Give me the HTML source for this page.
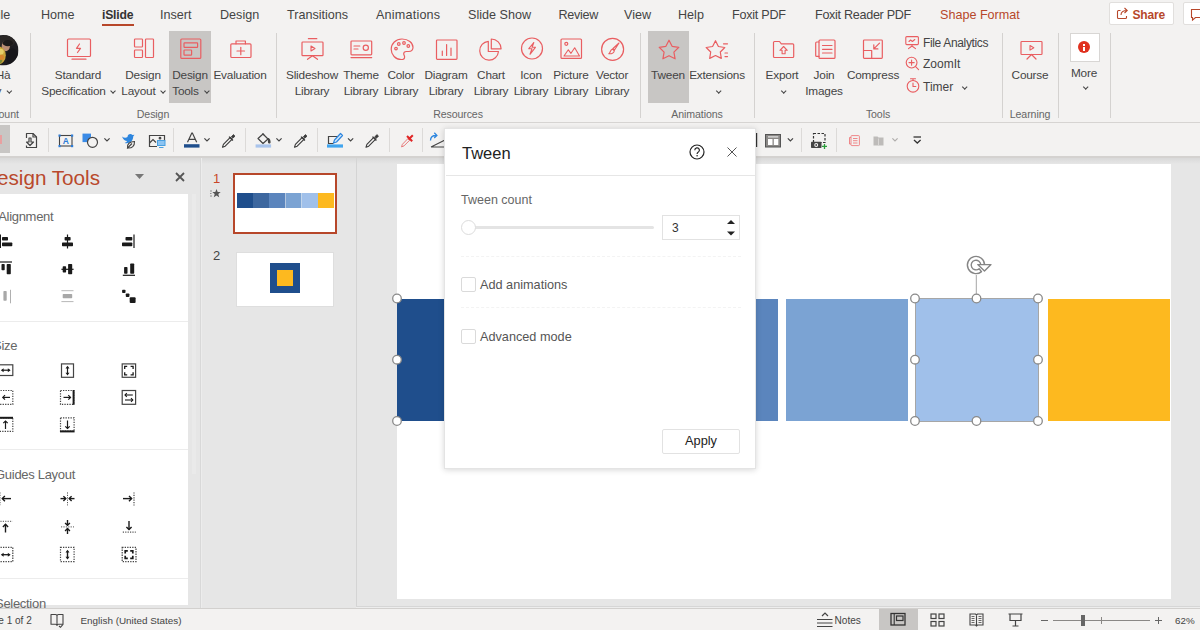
<!DOCTYPE html>
<html><head><meta charset="utf-8">
<style>
*{box-sizing:border-box;margin:0;padding:0}
html,body{width:1200px;height:630px;overflow:hidden;background:#e6e6e6;font-family:"Liberation Sans",sans-serif;}
.a{position:absolute}
.t{position:absolute;white-space:nowrap;color:#444;font-size:12px;line-height:14px}
.c{text-align:center}
#tabs{left:0;top:0;width:1200px;height:30px;background:#f3f2f1;overflow:hidden}
.tab{position:absolute;top:7px;font-size:12.6px;line-height:16px;color:#444;white-space:nowrap}
#ribbon{left:0;top:30px;width:1200px;height:93px;background:#f3f2f1;border-bottom:1px solid #d6d4d2}
.sep{position:absolute;top:33px;width:1px;height:85px;background:#d4d2d0}
.gl{position:absolute;top:108px;font-size:10.6px;letter-spacing:-.1px;line-height:13px;color:#666;white-space:nowrap;transform:translateX(-50%)}
.bl{position:absolute;font-size:11.8px;letter-spacing:-.2px;line-height:15.5px;color:#444;white-space:nowrap;text-align:center;transform:translateX(-50%)}
#qat{left:0;top:123px;width:1200px;height:35px;background:#f3f2f1;border-bottom:2px solid #d4d2d0}
svg{position:absolute;overflow:visible}
.ri{fill:none;stroke:#e95e61;stroke-width:1.2}
.chv{display:inline-block;width:4px;height:4px;border-right:1.2px solid #444;border-bottom:1.2px solid #444;transform:rotate(45deg) translate(-1px,-2px);margin-left:2px}
</style></head><body>
<!-- TABS -->
<div id="tabs" class="a">
<span class="tab" style="left:-10px">File</span>
<span class="tab" style="left:41px">Home</span>
<span class="tab" style="left:102px;color:#333;font-weight:bold;font-size:12.2px;letter-spacing:-.2px">iSlide</span>
<div class="a" style="left:102px;top:23.5px;width:32px;height:2.5px;background:#b7472a"></div>
<span class="tab" style="left:160px">Insert</span>
<span class="tab" style="left:220px">Design</span>
<span class="tab" style="left:287px">Transitions</span>
<span class="tab" style="left:376px;letter-spacing:.2px">Animations</span>
<span class="tab" style="left:468px">Slide Show</span>
<span class="tab" style="left:558.5px;letter-spacing:-.3px">Review</span>
<span class="tab" style="left:624px">View</span>
<span class="tab" style="left:678px">Help</span>
<span class="tab" style="left:732px;letter-spacing:-.25px">Foxit PDF</span>
<span class="tab" style="left:815px;letter-spacing:-.3px">Foxit Reader PDF</span>
<span class="tab" style="left:940px;color:#b7472a">Shape Format</span>
<div class="a" style="left:1109px;top:2px;width:65px;height:23px;background:#fff;border:1px solid #e1dfdd;border-radius:2px"></div>
<svg style="left:1116px;top:7px" width="13" height="13" viewBox="0 0 13 13"><path d="M4.5 3.5H2.5a1 1 0 0 0-1 1v6a1 1 0 0 0 1 1h7a1 1 0 0 0 1-1V9M5 8c0-3 2-4.5 6-4.5M8.5 1l2.7 2.5L8.5 6" fill="none" stroke="#b7472a" stroke-width="1.1"/></svg>
<span class="tab" style="left:1132.5px;color:#b7472a;font-weight:bold;font-size:12px;letter-spacing:-.2px">Share</span>
<div class="a" style="left:1183px;top:2px;width:30px;height:23px;background:#fff;border:1px solid #e1dfdd;border-radius:2px"></div>
<svg style="left:1190px;top:8px" width="12" height="12" viewBox="0 0 12 12"><path d="M1.5 1.5h12v8h-8l-3 2.5v-2.5h-1z" fill="none" stroke="#b7472a" stroke-width="1.1"/></svg>
</div>
<!-- RIBBON -->
<div id="ribbon" class="a"></div>
<!-- avatar -->
<svg style="left:-12px;top:34.7px" width="30.5" height="30.5" viewBox="0 0 30 30"><defs><clipPath id="av"><circle cx="15" cy="15" r="15"/></clipPath></defs><g clip-path="url(#av)"><rect width="30" height="30" fill="#1d1d21"/><ellipse cx="18" cy="6" rx="9" ry="6" fill="#2a2726"/><ellipse cx="17.5" cy="11" rx="4" ry="5" fill="#b98d74"/><ellipse cx="19.5" cy="8" rx="5" ry="3" fill="#1c1a1a"/><ellipse cx="10" cy="20" rx="7.5" ry="9" fill="#c9a53a"/><ellipse cx="12" cy="16.5" rx="3.5" ry="3" fill="#e6cf6a"/><ellipse cx="9" cy="25" rx="5" ry="4" fill="#7d8a35"/><ellipse cx="13" cy="22" rx="3" ry="2.5" fill="#d8872e"/><ellipse cx="24" cy="22" rx="6" ry="9" fill="#17171b"/></g></svg>
<div class="bl" style="left:3px;top:68px">Hà</div>
<div class="bl" style="left:3px;top:83.5px">y <span class="chv"></span></div>
<div class="gl" style="left:0px">Account</div>
<div class="sep" style="left:30px"></div>
<!-- highlighted -->
<div class="a" style="left:169px;top:31px;width:42px;height:72px;background:#c8c6c4"></div>
<div class="a" style="left:648px;top:31px;width:41px;height:72px;background:#c8c6c4"></div>
<div class="bl" style="left:78px;top:68px">Standard</div><div class="bl" style="left:78px;top:83.5px">Specification <span class="chv"></span></div><div class="bl" style="left:143px;top:68px">Design</div><div class="bl" style="left:143px;top:83.5px">Layout <span class="chv"></span></div><div class="bl" style="left:190px;top:68px">Design</div><div class="bl" style="left:190px;top:83.5px">Tools <span class="chv"></span></div><div class="bl" style="left:240px;top:68px">Evaluation</div><div class="gl" style="left:153px">Design</div><div class="sep" style="left:276px"></div><div class="bl" style="left:312px;top:68px">Slideshow</div><div class="bl" style="left:312px;top:83.5px">Library</div><div class="bl" style="left:361px;top:68px">Theme</div><div class="bl" style="left:361px;top:83.5px">Library</div><div class="bl" style="left:401px;top:68px">Color</div><div class="bl" style="left:401px;top:83.5px">Library</div><div class="bl" style="left:446px;top:68px">Diagram</div><div class="bl" style="left:446px;top:83.5px">Library</div><div class="bl" style="left:491px;top:68px">Chart</div><div class="bl" style="left:491px;top:83.5px">Library</div><div class="bl" style="left:531px;top:68px">Icon</div><div class="bl" style="left:531px;top:83.5px">Library</div><div class="bl" style="left:571px;top:68px">Picture</div><div class="bl" style="left:571px;top:83.5px">Library</div><div class="bl" style="left:612px;top:68px">Vector</div><div class="bl" style="left:612px;top:83.5px">Library</div><div class="gl" style="left:458px">Resources</div><div class="sep" style="left:640px"></div><div class="bl" style="left:668px;top:68px">Tween</div><div class="bl" style="left:717px;top:68px">Extensions</div><div class="bl" style="left:717px;top:83.5px"><span class="chv"></span></div><div class="gl" style="left:697px">Animations</div><div class="sep" style="left:754px"></div><div class="bl" style="left:782px;top:68px">Export</div><div class="bl" style="left:782px;top:83.5px"><span class="chv"></span></div><div class="bl" style="left:824px;top:68px">Join</div><div class="bl" style="left:824px;top:83.5px">Images</div><div class="bl" style="left:873px;top:68px">Compress</div><div class="t" style="left:923px;top:35.5px;line-height:15px;letter-spacing:-.35px">File Analytics</div>
<div class="t" style="left:923px;top:57px;line-height:15px">ZoomIt</div>
<div class="t" style="left:923px;top:79.5px;line-height:15px">Timer &nbsp;<span class="chv"></span></div>
<div class="gl" style="left:878px">Tools</div><div class="sep" style="left:1002px"></div><div class="bl" style="left:1030px;top:68px">Course</div><div class="gl" style="left:1030px">Learning</div><div class="sep" style="left:1058px"></div><div class="a" style="left:1070px;top:32.5px;width:29.5px;height:29px;background:#fff;border:1px solid #d8d6d4"></div>
<div class="a" style="left:1078px;top:41px;width:12px;height:12px;border-radius:50%;background:#e0311f"></div>
<div class="a" style="left:1083px;top:43.5px;width:2px;height:2px;background:#fff"></div>
<div class="a" style="left:1083px;top:46.5px;width:2px;height:4.5px;background:#fff"></div>
<div class="bl" style="left:1084px;top:66px">More</div>
<div class="bl" style="left:1084px;top:80px"><span class="chv"></span></div>
<div class="sep" style="left:1110px"></div>

<svg id="ricons" style="left:0;top:0" width="1200" height="125" viewBox="0 0 1200 125"><g class="ri" stroke-linejoin="round" stroke-linecap="round">
<!-- standard spec -->
<rect x="67.5" y="39" width="23" height="17.5" rx="1"/><path d="M72 59.2h14"/><path d="M79.5 44l-3 4.3h4l-3 4.2" stroke-width="1.2"/>
<!-- design layout -->
<rect x="134.5" y="39" width="8" height="8" rx=".8"/><rect x="134.5" y="50" width="8" height="7.5" rx=".8"/><rect x="145.5" y="39" width="8" height="18.5" rx=".8"/>
<!-- design tools -->
<rect x="180.8" y="39" width="20" height="19.4" rx="1"/><rect x="184" y="42.8" width="13.6" height="4.6" rx=".6"/><rect x="184" y="50" width="7.6" height="5.2" rx=".6"/>
<!-- evaluation -->
<rect x="230.8" y="43.8" width="20.2" height="13.7" rx="1"/><path d="M236 43.8v-2.8h9.4v2.8"/><path d="M237 51h7.5M240.8 47.3v7.4"/>
<!-- slideshow -->
<rect x="302" y="42" width="21" height="13.7" rx=".8"/><path d="M308.4 38.7h8.4M312.5 55.7l-5 3.6M312.5 55.7l5 3.6"/><path d="M311 46v5l4-2.5z" stroke-width="1.1"/>
<!-- theme -->
<rect x="351" y="41" width="20.7" height="13.8" rx=".8"/><path d="M351 57.6h20.7M354 46h5.8M354 49h4"/><circle cx="365.8" cy="47.8" r="2.6"/>
<!-- color palette -->
<path d="M402 39c-6.2 0-10.8 4.6-10.8 10.3 0 5.6 4.4 10.2 10 10.2 2.3 0 3.4-1.2 3.4-2.6 0-1.3-.9-1.9-.9-3.1 0-1.3 1-2.3 2.6-2.3h2.4c2.6 0 4.3-1.7 4.3-4.2C413 42.8 408.3 39 402 39z"/>
<circle cx="396" cy="48.6" r="1.3"/><circle cx="398.8" cy="44" r="1.3"/><circle cx="404" cy="43" r="1.3"/><circle cx="408.3" cy="46" r="1.3"/>
<!-- diagram -->
<rect x="436.5" y="40" width="20.5" height="19.3" rx=".800"/><path d="M442.3 51v4.5M446.6 44.5v11M451 48v7.5"/>
<!-- chart pie -->
<path d="M488.3 41.3a9.4 9.4 0 1 0 10.2 10.2h-10.2z"/><path d="M491.3 39v9.8h9.8a9.8 9.8 0 0 0-9.8-9.8z"/>
<!-- icon lib -->
<circle cx="532" cy="48.5" r="10.5"/><path d="M533.8 42.5l-5 6.2h3.2l-2 5.6 5.4-7h-3.3z" stroke-width="1.1"/>
<!-- picture -->
<rect x="561" y="39" width="20.5" height="19.4" rx="1"/><circle cx="566.3" cy="43.8" r="1.5"/><path d="M564 56l4.3-6.2 2.7 3.5 3.7-5.5 4.8 8.2z" stroke-width="1.1"/>
<!-- vector -->
<circle cx="612.6" cy="49.3" r="11"/><path d="M619 43l-6 5.5 1.5 1.5zM612.5 49l1.8 1.8c-.5 2-2 3.2-5.5 3 1.7-.8.8-3.5 3.7-4.8z" stroke-width="1.1"/>
<!-- tween star -->
<path d="M669.0,40.2 L672.1,46.3 L678.8,47.3 L673.9,52.1 L675.1,58.8 L669.0,55.7 L662.9,58.8 L664.1,52.1 L659.2,47.3 L665.9,46.3Z"/>
<!-- extensions -->
<path d="M715.5,40.7 L718.4,46.5 L724.8,47.5 L720.3,52.0 L721.3,58.4 L715.5,55.5 L709.7,58.4 L710.7,52.0 L706.2,47.5 L712.6,46.5Z"/><path d="M723.5 43.8h4M725 53h2.5M725 56.6h2.5"/>
<!-- export -->
<path d="M773.5 42.5a1 1 0 0 1 1-1h5l1.8 2.3h11.4a1 1 0 0 1 1 1v11.7a1 1 0 0 1-1 1h-18.2a1 1 0 0 1-1-1z"/><path d="M783.6 46.5l-3.7 3.8h2.2v3.4h3v-3.4h2.2z" stroke-width="1.1"/>
<!-- join images -->
<rect x="819" y="40" width="16" height="18.4" rx="1"/><path d="M819 42h-2.3a1 1 0 0 0-1 1v12.4a1 1 0 0 0 1 1h2.3M822.5 45.5h9.5M822.5 49.3h9.5M822.5 53h9.5"/>
<!-- compress -->
<rect x="863.5" y="40" width="18.8" height="18.4" rx=".800"/><path d="M863.5 50.5h8.2v7.9M879.5 43.2l-5.7 5.7M873.8 44.8v4.1h4.1"/>
<!-- file analytics -->
<rect x="905.8" y="36.6" width="12.6" height="8" rx="1" stroke-width="1.1"/><path d="M912 44.6v1.5M912 46l-3.5 2.6M912 46l3.5 2.6M909 41.5l1.6-1.5 1.8 1.5 2.4-2" stroke-width="1.1"/>
<!-- zoomit -->
<circle cx="911.6" cy="62.6" r="5.4" stroke-width="1.1"/><path d="M915.6 66.6l3 3M909 62.6h5.2M911.6 60v5.2" stroke-width="1.1"/>
<!-- timer -->
<circle cx="913" cy="86.3" r="5.8" stroke-width="1.1"/><path d="M910.5 78.8h5M913 78.8v1.7M913 83v3.5h2.8" stroke-width="1.1"/>
<!-- course -->
<rect x="1021" y="41.5" width="21" height="13" rx=".800"/><path d="M1031.5 54.5l-4.5 4.5M1031.5 54.5l4.5 4.5M1027 59h0"/><path d="M1030 45.5v4.6l3.8-2.3z" stroke-width="1.1"/>
</g></svg>
<!-- QAT -->
<div id="qat" class="a"></div>
<svg id="qicons" style="left:0;top:0" width="1200" height="160" viewBox="0 0 1200 160"><rect x="0" y="125" width="10" height="28" fill="#c8c6c4"/><rect x="0" y="135" width="2" height="9" fill="#e8a0a0"/><g fill="none" stroke="#444" stroke-width="1.2" stroke-linejoin="round"><path d="M26.5 138v-4.5h6.5l3.5 3.5v10.5h-10v-2"/><path d="M33 133.5v3.5h3.5"/><path d="M29 138v4h-2.5l3.5 3.5 3.5-3.5h-2.5v-4z"/></g><path d="M48.5 128v24" stroke="#dcdad8" stroke-width="1"/><rect x="59.5" y="135.5" width="12.5" height="10.5" fill="none" stroke="#444" stroke-width="1.1"/><rect x="58.5" y="134.5" width="2.2" height="2.2" fill="#2e7cd6"/><rect x="71.0" y="134.5" width="2.2" height="2.2" fill="#2e7cd6"/><rect x="58.5" y="145.0" width="2.2" height="2.2" fill="#2e7cd6"/><rect x="71.0" y="145.0" width="2.2" height="2.2" fill="#2e7cd6"/><text x="65.8" y="144" font-family="Liberation Sans" font-size="8.5" font-weight="bold" fill="#2e7cd6" text-anchor="middle">A</text><rect x="82.5" y="133.6" width="8.5" height="8.5" fill="#3b8be6"/><circle cx="92.5" cy="142.3" r="5" fill="#f3f2f1" stroke="#444" stroke-width="1.2"/><path d="M104.4 138.3l2.6 2.6 2.6-2.6" stroke="#444" stroke-width="1.2" fill="none"/><path d="M122 136.5c2 1.5 4 1.5 5.5.5 0-2.5 3-4 5-2l2-.300-1.3 1.8c0 5-4 7.5-8.5 6.5 1-.500 2-1 2.3-2-2 0-3.5-1-5-4.5z" fill="#2e86de"/><path d="M127.5 148c-.500-4 2-6.5 7-6.5.3 4.5-2.5 7-7 6.5zM127 148.5l5-5" fill="#f3f2f1" stroke="#444" stroke-width="1.1"/><g fill="none" stroke="#444" stroke-width="1.2"><path d="M157 146.5h-7.5v-11h15v5"/><path d="M149.5 143l3.5-3.5 3 3"/><circle cx="160" cy="138.2" r=".800" fill="#444"/></g><rect x="157.5" y="140.5" width="7.5" height="5" fill="#8cc4f2" stroke="#4aa0e0" stroke-width="1"/><path d="M159 147.5h4.5" stroke="#4aa0e0" stroke-width="1"/><path d="M173.5 128v24" stroke="#dcdad8" stroke-width="1"/><path d="M187.5 142.3l4.3-9.3h.600l4.3 9.3M189 139.3h6" fill="none" stroke="#444" stroke-width="1.2"/><rect x="184" y="144.2" width="15.5" height="3.4" fill="#1f4e8c"/><path d="M204.4 138.3l2.6 2.6 2.6-2.6" stroke="#444" stroke-width="1.2" fill="none"/><g transform="translate(221.0,133)" fill="none" stroke="#3a3a3a" stroke-width="1.1" stroke-linejoin="round"><path d="M9.3 4.3l1.9 1.9-7 7-2.7 1 .900-2.8z"/><path d="M8 3.6l3.9 3.9" stroke-width="1.3"/><path d="M10.4 3.8l2-2.2 1.6 1.6-2.2 2z" fill="#3a3a3a" stroke-width=".8"/></g><path d="M245.5 128v24" stroke="#dcdad8" stroke-width="1"/><g fill="none" stroke="#444" stroke-width="1.2" stroke-linejoin="round"><path d="M263 134l5 5-5 4.5-5-5z"/><path d="M262.5 133.5l1.5 1.5"/><path d="M268.5 138.5c1.5 1.5 2 2.5 1.5 4-.700.8-1.5.3-1.5-.500z" fill="#444"/></g><rect x="255.6" y="144.4" width="15.5" height="3.2" fill="#a9c4ec"/><path d="M276.4 138.3l2.6 2.6 2.6-2.6" stroke="#444" stroke-width="1.2" fill="none"/><g transform="translate(293.0,133)" fill="none" stroke="#3a3a3a" stroke-width="1.1" stroke-linejoin="round"><path d="M9.3 4.3l1.9 1.9-7 7-2.7 1 .900-2.8z"/><path d="M8 3.6l3.9 3.9" stroke-width="1.3"/><path d="M10.4 3.8l2-2.2 1.6 1.6-2.2 2z" fill="#3a3a3a" stroke-width=".8"/></g><path d="M317.5 128v24" stroke="#dcdad8" stroke-width="1"/><path d="M338 136.5h-9.5v7h5" fill="none" stroke="#444" stroke-width="1.2"/><path d="M340.5 133.5l2 2-6 6.5-3 1 1-3z" fill="#cfe6fb" stroke="#2e86de" stroke-width="1.2" stroke-linejoin="round"/><rect x="327" y="144.4" width="16" height="3.2" fill="#41a5ee"/><path d="M348.0 138.3l2.6 2.6 2.6-2.6" stroke="#444" stroke-width="1.2" fill="none"/><g transform="translate(364.5,133)" fill="none" stroke="#3a3a3a" stroke-width="1.1" stroke-linejoin="round"><path d="M9.3 4.3l1.9 1.9-7 7-2.7 1 .900-2.8z"/><path d="M8 3.6l3.9 3.9" stroke-width="1.3"/><path d="M10.4 3.8l2-2.2 1.6 1.6-2.2 2z" fill="#3a3a3a" stroke-width=".8"/></g><path d="M389.5 128v24" stroke="#dcdad8" stroke-width="1"/><g transform="translate(400,133)" fill="none" stroke-linejoin="round"><path d="M8 5.5l1.7 1.7-5.7 5.7-2.5 1 .900-2.6z" stroke="#e87a7a" stroke-width="1"/><path d="M7 3l5.2 5.2M12.8 2.2l-4.3 4.3" stroke="#e02525" stroke-width="2"/></g><path d="M422.5 128v24" stroke="#dcdad8" stroke-width="1"/><path d="M430.5 140.5c0-3.5 2-5 5.5-5M434.3 132.8l2.6 2.7-2.7 2.5" fill="none" stroke="#2e86de" stroke-width="1.3"/><path d="M431 147l14-7M431 147h14" fill="none" stroke="#444" stroke-width="1.1"/><path d="M756.5 133v14" stroke="#333" stroke-width="1.4"/><rect x="765.5" y="134.5" width="15" height="12.5" fill="#8a8886" stroke="#555" stroke-width="1"/><rect x="768" y="139" width="4.5" height="6" fill="#fff"/><rect x="773.8" y="139" width="4.5" height="6" fill="#fff"/><rect x="768" y="136.3" width="10.3" height="1.2" fill="#e8e8e8"/><path d="M787.8 138.3l2.6 2.6 2.6-2.6" stroke="#444" stroke-width="1.2" fill="none"/><path d="M801.5 128v24" stroke="#dcdad8" stroke-width="1"/><rect x="813.5" y="133.5" width="11.5" height="9" fill="none" stroke="#333" stroke-width="1.2" stroke-dasharray="2.5 1.5"/><rect x="811" y="141.8" width="10.5" height="6.2" rx=".800" fill="#444"/><circle cx="816.2" cy="145" r="2" fill="#f3f2f1"/><circle cx="816.2" cy="145" r=".900" fill="#444"/><path d="M822 146.4h5M824.5 144v5" stroke="#2a9d3a" stroke-width="1.3"/><path d="M836.5 128v24" stroke="#dcdad8" stroke-width="1"/><g fill="none" stroke="#ee7c7e" stroke-width=".9"><rect x="851" y="135.6" width="8.4" height="10" rx=".800"/><path d="M851 137.5h-1.5v6.5h1.5M853 138.5h4.5M853 140.7h4.5M853 143h4.5"/></g><path d="M873.5 136.5h4l1 1h5v8h-10z" fill="#bdbbb9"/><path d="M878.5 138.5v7" stroke="#d8d6d4" stroke-width="1"/><path d="M892.4 138.3l2.6 2.6 2.6-2.6" stroke="#b0aeac" stroke-width="1.2" fill="none"/><path d="M913.5 137h7.5" stroke="#333" stroke-width="1.3"/><path d="M914 140l3.3 3 3.3-3" fill="none" stroke="#333" stroke-width="1.3"/></svg>
<!-- MAIN -->
<div id="main" class="a" style="left:0;top:158px;width:1200px;height:450px;background:#e6e6e6"></div>
<div class="a" style="left:0;top:158px;width:1200px;height:6px;background:linear-gradient(#d9d9d9,#e6e6e6)"></div>
<!-- design tools pane -->
<div class="t" style="left:-18px;top:166px;font-size:20.7px;line-height:24px;color:#b9492c">Design Tools</div>
<svg style="left:135px;top:174px" width="10" height="6" viewBox="0 0 10 6"><path d="M0 0h9l-4.5 5z" fill="#777"/></svg>
<svg style="left:175px;top:172px" width="10" height="10" viewBox="0 0 10 10"><path d="M1 1l8 8M9 1l-8 8" stroke="#555" stroke-width="1.8"/></svg>
<div class="a" style="left:0;top:194px;width:188px;height:410.5px;background:#fff"></div>
<div class="a" style="left:192px;top:194px;width:4px;height:280px;background:#eaeaea"></div>
<div class="t" style="right:1146.7px;top:208.6px;font-size:13px;letter-spacing:-.3px;line-height:15px;color:#666">Alignment</div>
<div class="a" style="left:0;top:321px;width:188px;height:1px;background:#ececec"></div>
<div class="t" style="right:1182.9px;top:337.6px;font-size:13px;letter-spacing:-.3px;line-height:15px;color:#666">Size</div>
<div class="a" style="left:0;top:449px;width:188px;height:1px;background:#ececec"></div>
<div class="t" style="right:1125.0px;top:466.6px;font-size:13px;letter-spacing:-.3px;line-height:15px;color:#666">Guides Layout</div>
<div class="a" style="left:0;top:578px;width:188px;height:1px;background:#ececec"></div>
<div class="t" style="right:1154.2px;top:595.6px;font-size:13px;letter-spacing:-.3px;line-height:15px;color:#666">Selection</div>
<!-- thumbnails pane -->
<div class="a" style="left:200px;top:158px;width:1px;height:450px;background:#d8d8d8"></div><div class="a" style="left:201px;top:158px;width:1px;height:450px;background:#ececec"></div>
<div class="a" style="left:356px;top:158px;width:1px;height:450px;background:#d4d4d4"></div>
<div class="t" style="left:213px;top:171px;font-size:13px;line-height:16px;color:#c8472a">1</div>
<svg style="left:210px;top:189px" width="11" height="10" viewBox="0 0 11 10"><path d="M6.5 0l1.2 3h3l-2.4 2 .900 3.3-2.7-1.9-2.7 1.9.9-3.3-2.4-2h3z" fill="#555"/><path d="M0 2h2M0 4.5h1.5M0 7h2" stroke="#777" stroke-width=".800"/></svg>
<div class="a" style="left:233px;top:173px;width:104px;height:61px;background:#fff;border:2px solid #b7472a"></div>
<div class="a" style="left:237px;top:193px;width:97px;height:15px;background:linear-gradient(90deg,#1f4e8c 0,#1f4e8c 16.2px,#3d679f 16.2px,#3d679f 32.4px,#5b85bd 32.4px,#5b85bd 48.6px,#7ba3d3 48.6px,#7ba3d3 64.8px,#a0c0ea 64.8px,#a0c0ea 81px,#fdb91f 81px)"></div>
<div class="a" style="left:237px;top:193px;width:97px;height:15px;background:repeating-linear-gradient(90deg,transparent 0,transparent 15.8px,rgba(255,255,255,.55) 15.8px,rgba(255,255,255,.55) 16.2px)"></div><div class="t" style="left:213px;top:248px;font-size:13px;line-height:16px;color:#444">2</div>
<div class="a" style="left:236px;top:252px;width:98px;height:55px;background:#fff;border:1px solid #dedede"></div>
<div class="a" style="left:270px;top:263px;width:30px;height:30px;background:#1f4e8c"></div>
<div class="a" style="left:277px;top:270px;width:16px;height:16px;background:#fdb91f"></div>
<!-- slide -->
<div class="a" style="left:397px;top:164px;width:773.5px;height:435px;background:#fff"></div>
<div class="a" style="left:397px;top:299px;width:123px;height:122px;background:#1f4e8c"></div>
<div class="a" style="left:655px;top:299px;width:123px;height:122px;background:#5b85bd"></div>
<div class="a" style="left:786px;top:299px;width:122px;height:122px;background:#7ba3d3"></div>
<div class="a" style="left:915px;top:298px;width:124px;height:124px;background:#a0c0ea;border:1px solid #a6a6a6"></div>
<div class="a" style="left:1048px;top:299px;width:122px;height:122px;background:#fdb91f"></div>
<svg id="handles" style="left:0;top:0" width="1200" height="630" viewBox="0 0 1200 630"><g fill="#fff" stroke="#8a8a8a" stroke-width="1.3">
<path d="M976.3 298v-23" fill="none" stroke="#a6a6a6" stroke-width="1"/>
<circle cx="397" cy="298.5" r="4.3"/><circle cx="397" cy="359.7" r="4.3"/><circle cx="397" cy="421" r="4.3"/>
<circle cx="915" cy="298.5" r="4.3"/><circle cx="976.5" cy="298.5" r="4.3"/><circle cx="1038" cy="298.5" r="4.3"/>
<circle cx="915" cy="359.7" r="4.3"/><circle cx="1038" cy="359.7" r="4.3"/>
<circle cx="915" cy="421" r="4.3"/><circle cx="976.5" cy="421" r="4.3"/><circle cx="1038" cy="421" r="4.3"/>
</g>
<path d="M981.5 271.6A8.6 8.6 0 1 1 984.6 265H980.8A4.8 4.8 0 1 0 979.1 268.7Z" fill="#fff" stroke="#858585" stroke-width="1.4" stroke-linejoin="round"/><path d="M977.8 264.6h13.2l-6.5 6.5z" fill="#fff" stroke="#858585" stroke-width="1.4" stroke-linejoin="round"/>
</svg>
<!-- dialog -->
<div class="a" style="left:444px;top:128px;width:312px;height:341px;background:#fff;border:1px solid #e4e4e4;box-shadow:0 1px 6px rgba(0,0,0,.16)"></div>
<div class="t" style="left:462px;top:143px;font-size:16.5px;line-height:20px;color:#222">Tween</div>
<svg style="left:689px;top:144px" width="16" height="16" viewBox="0 0 16 16"><circle cx="8" cy="8" r="7" fill="none" stroke="#222" stroke-width="1.2"/><path d="M5.8 6.3a2.3 2.3 0 1 1 3.3 2c-.700.4-1 .800-1 1.6" fill="none" stroke="#222" stroke-width="1.2"/><circle cx="8.1" cy="11.7" r=".800" fill="#222"/></svg>
<svg style="left:727px;top:147px" width="10" height="10" viewBox="0 0 10 10"><path d="M.500.5l9 9M9.5.5l-9 9" stroke="#555" stroke-width="1"/></svg>
<div class="a" style="left:446px;top:175px;width:309px;height:1px;background:#e6e6e6"></div>
<div class="t" style="left:461px;top:192.7px;font-size:12.5px;line-height:15px;color:#666">Tween count</div>
<div class="a" style="left:470px;top:225.5px;width:184px;height:3px;border-radius:2px;background:#e4e4e4"></div>
<div class="a" style="left:461px;top:219.5px;width:15px;height:15px;border-radius:50%;background:#fff;border:1px solid #dcdcdc"></div>
<div class="a" style="left:662px;top:215px;width:78px;height:25px;background:#fff;border:1px solid #e2e2e2"></div>
<div class="t" style="left:672px;top:220.7px;font-size:12px;line-height:15px;color:#333">3</div>
<svg style="left:727px;top:219px" width="8" height="18" viewBox="0 0 8 18"><path d="M0 5l4-4 4 4zM0 12.5l4 4 4-4z" fill="#222"/></svg>
<div class="a" style="left:461px;top:256px;width:280px;height:0;border-top:1px dashed #f3f3f3"></div>
<div class="a" style="left:461px;top:277px;width:15px;height:15px;background:#fff;border:1px solid #dadada;border-radius:2px"></div>
<div class="t" style="left:480px;top:277.7px;font-size:12.7px;line-height:15px;color:#555">Add animations</div>
<div class="a" style="left:461px;top:307px;width:280px;height:0;border-top:1px dashed #f3f3f3"></div>
<div class="a" style="left:461px;top:329px;width:15px;height:15px;background:#fff;border:1px solid #dadada;border-radius:2px"></div>
<div class="t" style="left:480px;top:329.7px;font-size:12.7px;line-height:15px;color:#555">Advanced mode</div>
<div class="a" style="left:662px;top:429px;width:78px;height:25px;background:#fff;border:1px solid #e2e2e2;border-radius:2px"></div>
<div class="t c" style="left:662px;top:433px;width:78px;font-size:12.8px;line-height:16px;color:#222">Apply</div>
<svg id="pane" style="left:0;top:0" width="200" height="630" viewBox="0 0 200 630"><path d="M0.5 234.5L0.5 248.0" stroke="#1a1a1a" stroke-width="1.0" fill="none"/><rect x="2.0" y="237.0" width="6.0" height="3.5" rx="0.7" fill="#1a1a1a"/><rect x="2.0" y="242.5" width="10.3" height="3.8" rx="0.7" fill="#1a1a1a"/><path d="M67.5 234.5L67.5 248.5" stroke="#1a1a1a" stroke-width="1.2" fill="none"/><rect x="64.6" y="237.0" width="6.0" height="3.5" rx="0.7" fill="#1a1a1a"/><rect x="62.0" y="242.5" width="11.0" height="3.8" rx="0.7" fill="#1a1a1a"/><path d="M134.0 234.5L134.0 248.0" stroke="#1a1a1a" stroke-width="1.2" fill="none"/><rect x="125.5" y="237.0" width="6.8" height="3.5" rx="0.7" fill="#1a1a1a"/><rect x="122.0" y="242.5" width="10.3" height="3.8" rx="0.7" fill="#1a1a1a"/><path d="M-2.0 262.0L12.0 262.0" stroke="#1a1a1a" stroke-width="1.2" fill="none"/><rect x="1.5" y="264.0" width="3.2" height="6.2" rx="0.7" fill="#1a1a1a"/><rect x="6.7" y="264.0" width="4.1" height="10.2" rx="0.7" fill="#1a1a1a"/><path d="M61.4 269.3L73.6 269.3" stroke="#1a1a1a" stroke-width="1.2" fill="none"/><rect x="62.7" y="266.2" width="3.4" height="6.3" rx="0.7" fill="#1a1a1a"/><rect x="68.1" y="264.1" width="4.1" height="10.1" rx="0.7" fill="#1a1a1a"/><path d="M122.8 275.3L135.0 275.3" stroke="#1a1a1a" stroke-width="1.2" fill="none"/><rect x="124.1" y="267.1" width="3.4" height="6.6" rx="0.7" fill="#1a1a1a"/><rect x="130.2" y="263.5" width="4.0" height="10.2" rx="0.7" fill="#1a1a1a"/><path d="M-1.0 289.8L-1.0 303.3" stroke="#b0b0b0" stroke-width="1.0" fill="none"/><path d="M10.5 289.8L10.5 303.3" stroke="#b0b0b0" stroke-width="1.0" fill="none"/><rect x="3.4" y="291.0" width="3.3" height="9.8" rx="0.7" fill="#a8a8a8"/><path d="M61.4 290.7L73.5 290.7" stroke="#b8b8b8" stroke-width="1.0" fill="none"/><path d="M61.4 301.6L73.5 301.6" stroke="#b8b8b8" stroke-width="1.0" fill="none"/><rect x="62.7" y="294.0" width="9.5" height="4.2" rx="0.7" fill="#a8a8a8"/><rect x="122.1" y="289.8" width="3.4" height="3.3" rx="0.8" fill="#1a1a1a"/><rect x="125.8" y="293.4" width="3.6" height="3.6" rx="0.8" fill="#1a1a1a"/><rect x="129.7" y="297.2" width="5.9" height="5.8" rx="1.0" fill="#1a1a1a"/><rect x="-2.0" y="364.8" width="14.8" height="10.7" fill="none" stroke="#444" stroke-width="1.2"/><path d="M2 370.2H9.6" stroke="#1a1a1a" stroke-width="1.2" fill="none"/><path d="M.8 370.2l2.8-2v4z" fill="#1a1a1a"/><path d="M10.6 370.2l-2.8-2v4z" fill="#1a1a1a"/><rect x="61.5" y="363.9" width="12.0" height="13.4" fill="none" stroke="#444" stroke-width="1.2"/><path d="M67.5 367V374.3" stroke="#1a1a1a" stroke-width="1.2" fill="none"/><path d="M67.5 365.7l-2 2.8h4z" fill="#1a1a1a"/><path d="M67.5 375.5l-2-2.8h4z" fill="#1a1a1a"/><rect x="122.2" y="363.9" width="13.4" height="13.4" fill="none" stroke="#444" stroke-width="1.2"/><path d="M124.7 368.9v-2.5h2.5" stroke="#1a1a1a" stroke-width="1.3" fill="none"/><path d="M124.7 372.3v2.5h2.5" stroke="#1a1a1a" stroke-width="1.3" fill="none"/><path d="M133.1 368.9v-2.5h-2.5" stroke="#1a1a1a" stroke-width="1.3" fill="none"/><path d="M133.1 372.3v2.5h-2.5" stroke="#1a1a1a" stroke-width="1.3" fill="none"/><rect x="-2.0" y="390.5" width="14.8" height="13.8" fill="none" stroke="#444" stroke-width="1.2" stroke-dasharray="1.3 1.2"/><path d="M2.8 397.4H10.0" stroke="#1a1a1a" stroke-width="1.2" fill="none"/><path d="M5.0 395.2l-2.2 2.2l2.2 2.2" stroke="#1a1a1a" stroke-width="1.2" fill="none"/><rect x="60.5" y="390.5" width="13.2" height="13.8" fill="none" stroke="#444" stroke-width="1.2" stroke-dasharray="1.3 1.2"/><path d="M73.6 390.0L73.6 404.8" stroke="#1a1a1a" stroke-width="2.0" fill="none"/><path d="M63.5 397.4H70.5" stroke="#1a1a1a" stroke-width="1.2" fill="none"/><path d="M68.3 395.2l2.2 2.2l-2.2 2.2" stroke="#1a1a1a" stroke-width="1.2" fill="none"/><rect x="122.2" y="390.5" width="13.4" height="13.8" fill="none" stroke="#444" stroke-width="1.2"/><path d="M125.0 395.0H132.8" stroke="#1a1a1a" stroke-width="1.1" fill="none"/><path d="M126.8 393.2l-1.8 1.8l1.8 1.8" stroke="#1a1a1a" stroke-width="1.1" fill="none"/><path d="M125.0 400.0H132.8" stroke="#1a1a1a" stroke-width="1.1" fill="none"/><path d="M131.0 398.2l1.8 1.8l-1.8 1.8" stroke="#1a1a1a" stroke-width="1.1" fill="none"/><rect x="-2.0" y="418.0" width="14.8" height="13.4" fill="none" stroke="#444" stroke-width="1.2" stroke-dasharray="1.3 1.2"/><path d="M-2.0 417.8L13.0 417.8" stroke="#1a1a1a" stroke-width="2.0" fill="none"/><path d="M5.5 421.0V429.0" stroke="#1a1a1a" stroke-width="1.2" fill="none"/><path d="M3.3 423.2l2.2 -2.2l2.2 2.2" stroke="#1a1a1a" stroke-width="1.2" fill="none"/><rect x="60.5" y="417.8" width="13.6" height="13.4" fill="none" stroke="#444" stroke-width="1.2" stroke-dasharray="1.3 1.2"/><path d="M60.0 431.4L74.6 431.4" stroke="#1a1a1a" stroke-width="2.0" fill="none"/><path d="M67.5 420.5V428.5" stroke="#1a1a1a" stroke-width="1.2" fill="none"/><path d="M65.3 426.3l2.2 2.2l2.2 -2.2" stroke="#1a1a1a" stroke-width="1.2" fill="none"/><path d="M0.0 492.4L0.0 505.2" stroke="#555" stroke-width="1.0" fill="none" stroke-dasharray="1.2 1.2"/><path d="M2.3 498.6H11.0" stroke="#1a1a1a" stroke-width="1.4" fill="none"/><path d="M4.9 496.0l-2.6 2.6l2.6 2.6" stroke="#1a1a1a" stroke-width="1.4" fill="none"/><path d="M67.5 492.4L67.5 505.4" stroke="#555" stroke-width="1.0" fill="none" stroke-dasharray="1.2 1.2"/><path d="M60.5 498.6H65.8" stroke="#1a1a1a" stroke-width="1.4" fill="none"/><path d="M63.4 496.2l2.4 2.4l-2.4 2.4" stroke="#1a1a1a" stroke-width="1.4" fill="none"/><path d="M69.2 498.6H74.5" stroke="#1a1a1a" stroke-width="1.4" fill="none"/><path d="M71.6 496.2l-2.4 2.4l2.4 2.4" stroke="#1a1a1a" stroke-width="1.4" fill="none"/><path d="M123.0 498.6H131.6" stroke="#1a1a1a" stroke-width="1.4" fill="none"/><path d="M129.0 496.0l2.6 2.6l-2.6 2.6" stroke="#1a1a1a" stroke-width="1.4" fill="none"/><path d="M134.0 492.4L134.0 505.4" stroke="#555" stroke-width="1.3" fill="none" stroke-dasharray="1.2 1.2"/><path d="M-2.0 521.3L12.5 521.3" stroke="#555" stroke-width="1.0" fill="none" stroke-dasharray="1.2 1.2"/><path d="M5.5 524.3V532.5" stroke="#1a1a1a" stroke-width="1.4" fill="none"/><path d="M2.9 526.9l2.6 -2.6l2.6 2.6" stroke="#1a1a1a" stroke-width="1.4" fill="none"/><path d="M61.0 526.9L74.0 526.9" stroke="#555" stroke-width="1.0" fill="none" stroke-dasharray="1.2 1.2"/><path d="M67.5 520.0V525.3" stroke="#1a1a1a" stroke-width="1.4" fill="none"/><path d="M65.1 522.9l2.4 2.4l2.4 -2.4" stroke="#1a1a1a" stroke-width="1.4" fill="none"/><path d="M67.5 528.6V534.0" stroke="#1a1a1a" stroke-width="1.4" fill="none"/><path d="M65.1 531.0l2.4 -2.4l2.4 2.4" stroke="#1a1a1a" stroke-width="1.4" fill="none"/><path d="M129.0 521.0V529.6" stroke="#1a1a1a" stroke-width="1.4" fill="none"/><path d="M126.4 527.0l2.6 2.6l2.6 -2.6" stroke="#1a1a1a" stroke-width="1.4" fill="none"/><path d="M122.8 532.1L135.8 532.1" stroke="#555" stroke-width="1.3" fill="none" stroke-dasharray="1.2 1.2"/><rect x="-2.0" y="547.4" width="14.8" height="14.2" fill="none" stroke="#444" stroke-width="1.2" stroke-dasharray="1.3 1.2"/><path d="M2 554.7H9.6" stroke="#1a1a1a" stroke-width="1.3" fill="none"/><path d="M.8 554.7l2.8-2v4z" fill="#1a1a1a"/><path d="M10.6 554.7l-2.8-2v4z" fill="#1a1a1a"/><rect x="60.5" y="547.4" width="13.6" height="14.2" fill="none" stroke="#444" stroke-width="1.2" stroke-dasharray="1.3 1.2"/><path d="M67.5 551V558.5" stroke="#1a1a1a" stroke-width="1.4" fill="none"/><path d="M67.5 549.8l-2 2.8h4z" fill="#1a1a1a"/><path d="M67.5 559.6l-2-2.8h4z" fill="#1a1a1a"/><rect x="122.2" y="547.4" width="13.8" height="14.2" fill="none" stroke="#444" stroke-width="1.2" stroke-dasharray="1.3 1.2"/><path d="M125.2 553.4v-2.6h2.6" stroke="#1a1a1a" stroke-width="1.7" fill="none"/><path d="M125.2 555.8v2.6h2.6" stroke="#1a1a1a" stroke-width="1.7" fill="none"/><path d="M132.8 553.4v-2.6h-2.6" stroke="#1a1a1a" stroke-width="1.7" fill="none"/><path d="M132.8 555.8v2.6h-2.6" stroke="#1a1a1a" stroke-width="1.7" fill="none"/></svg>
<!-- STATUS -->
<div id="status" class="a" style="left:0;top:608px;width:1200px;height:22px;background:#f3f2f1;border-top:1px solid #d2d0ce"></div>
<div class="a" style="left:356px;top:606px;width:844px;height:1px;background:#d6d6d6"></div><div class="a" style="left:356px;top:607px;width:844px;height:1px;background:#ededed"></div>
<div class="t" style="right:1168.3px;top:614px;font-size:10px;line-height:14px;color:#444">Slide 1 of 2</div>
<svg style="left:50px;top:613px" width="15" height="15" viewBox="0 0 15 15"><path d="M1 1.5h4.5c1 0 1.5.5 1.5 1.5v9.5c0-.700-.500-1.2-1.5-1.2h-4.5zM7 3c0-1 .500-1.5 1.5-1.5h4.5v9.8h-4.5c-1 0-1.5.5-1.5 1.2" fill="none" stroke="#444" stroke-width="1.1" stroke-linejoin="round"/><path d="M9 13l1.5 1.3 2.5-3" fill="none" stroke="#444" stroke-width="1.1"/></svg>
<div class="t" style="left:80.5px;top:614px;font-size:9.9px;line-height:14px;color:#444">English (United States)</div>
<svg style="left:817px;top:611px" width="16" height="18" viewBox="0 0 16 18"><path d="M5 5l3-3 3 3" fill="none" stroke="#444" stroke-width="1.2"/><path d="M0 8.5h15.5M0 12h15.5M0 15.5h15.5" stroke="#444" stroke-width="1"/></svg>
<div class="t" style="left:834.5px;top:614px;font-size:10.1px;line-height:14px;color:#444">Notes</div>
<div class="a" style="left:879px;top:609px;width:39px;height:21px;background:#c8c6c4"></div>
<svg style="left:890px;top:612px" width="16" height="15" viewBox="0 0 16 15"><rect x="1" y="1.5" width="14" height="11.5" fill="none" stroke="#333" stroke-width="1.3"/><path d="M4.2 1.5v11.5" stroke="#333" stroke-width="1.1"/><rect x="6.5" y="4" width="6.5" height="4.5" fill="none" stroke="#333" stroke-width="1.2"/></svg>
<svg style="left:930px;top:613px" width="15" height="14" viewBox="0 0 15 14"><g fill="none" stroke="#444" stroke-width="1.2"><rect x="1" y="1" width="5" height="4.5"/><rect x="9" y="1" width="5" height="4.5"/><rect x="1" y="8.5" width="5" height="4.5"/><rect x="9" y="8.5" width="5" height="4.5"/></g></svg>
<svg style="left:969px;top:613px" width="15" height="14" viewBox="0 0 15 14"><path d="M1 1h5.5l1 1 1-1h5.5v11h-5.5l-1 1-1-1h-5.5zM7.5 2v11" fill="none" stroke="#444" stroke-width="1.1"/><path d="M2.5 3.5h3M2.5 5.5h3M2.5 7.5h3M2.5 9.5h3M9.5 3.5h3M9.5 5.5h3M9.5 7.5h3M9.5 9.5h3" stroke="#444" stroke-width=".800"/></svg>
<svg style="left:1008px;top:613px" width="15" height="15" viewBox="0 0 15 15"><path d="M.500 1h14M2 1v6.5h11v-6.5M7.5 7.5v5M4.5 13h6" fill="none" stroke="#444" stroke-width="1.2"/></svg>
<div class="a" style="left:1041px;top:620px;width:7px;height:1px;background:#666"></div>
<div class="a" style="left:1053px;top:620px;width:97px;height:1px;background:#8a8886"></div>
<div class="a" style="left:1101px;top:617px;width:1px;height:7px;background:#8a8886"></div>
<div class="a" style="left:1081px;top:615px;width:4px;height:11px;background:#666"></div>
<div class="a" style="left:1155px;top:620px;width:7px;height:1px;background:#666"></div>
<div class="a" style="left:1158px;top:617px;width:1px;height:7px;background:#666"></div>
<div class="t" style="left:1175px;top:614px;font-size:9.8px;line-height:14px;color:#444">62%</div>
</body></html>
